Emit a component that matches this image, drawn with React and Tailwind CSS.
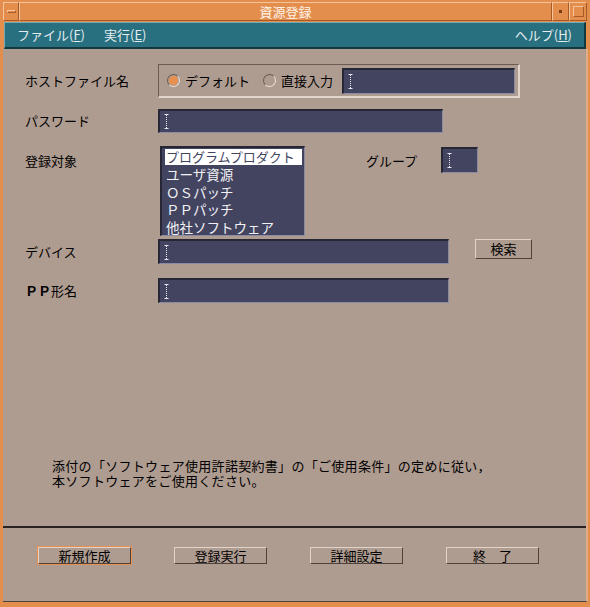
import React from 'react';

function IBeam() {
  return (
    <svg width="5" height="15" viewBox="0 0 5 15" className="shrink-0">
      <path d="M0.5 0.5H4.5M0.5 14.5H4.5" stroke="#e6e6f0" strokeWidth="1" />
      <path d="M2.5 1V14" stroke="#e6e6f0" strokeWidth="1" strokeDasharray="1 1" />
    </svg>
  );
}

function Field({ className }) {
  return (
    <div
      className={`flex items-center pl-[4px] bg-[#424460] border-t-2 border-l-2 border-t-[#262634] border-l-[#262634] border-b border-r border-b-[#8c8ba6] border-r-[#8c8ba6] ${className}`}
    >
      <IBeam />
    </div>
  );
}

function Radio({ on }) {
  return (
    <span className="w-[13px] h-[13px] shrink-0 rounded-full border border-t-[#6b5b53] border-l-[#6b5b53] border-b-[#efe1d8] border-r-[#efe1d8] flex items-center justify-center">
      {on && <span className="w-[9px] h-[9px] rounded-full bg-[#e8904f]" />}
    </span>
  );
}

function Button({ children, focus }) {
  return (
    <div className={`border ${focus ? 'border-[#e8904f]' : 'border-transparent'}`}>
      <div className="w-[93px] h-[17px] flex items-center justify-center text-[13px] text-black border-t border-l border-t-[#e2d3ca] border-l-[#e2d3ca] border-b border-r border-b-[#4f423c] border-r-[#4f423c]">
        {children}
      </div>
    </div>
  );
}

const LIST = ['ユーザ資源', 'ＯＳパッチ', 'ＰＰパッチ', '他社ソフトウェア'];

export default function App() {
  return (
    <div className="w-[590px] h-[607px] bg-[#e48e4e] pt-[2px] pl-[3px] pr-[3px] pb-[5px] flex flex-col font-['Noto_Sans_CJK_JP','Noto_Sans',sans-serif] overflow-hidden">
      {/* title bar */}
      <div className="h-[19px] flex shrink-0">
        <div className="w-[16px] flex items-center justify-center border-t border-l border-t-[#f6c39b] border-l-[#f6c39b] border-b border-r border-b-[#a85a26] border-r-[#a85a26]">
          <span className="w-[9px] h-[3px] border-t border-l border-t-[#f6c39b] border-l-[#f6c39b] border-b border-r border-b-[#a85a26] border-r-[#a85a26]" />
        </div>
        <div className="flex-1 flex items-center justify-center text-[13px] text-[#fff4ea] border-t border-l border-t-[#f6c39b] border-l-[#f6c39b] border-b border-r border-b-[#a85a26] border-r-[#a85a26]">
          資源登録
        </div>
        <div className="w-[17px] flex items-center justify-center border-t border-l border-t-[#f6c39b] border-l-[#f6c39b] border-b border-r border-b-[#a85a26] border-r-[#a85a26]">
          <span className="w-[3px] h-[3px] bg-[#7a3c14]" />
        </div>
        <div className="w-[18px] flex items-center justify-center border-t border-l border-t-[#f6c39b] border-l-[#f6c39b] border-b border-r border-b-[#a85a26] border-r-[#a85a26]">
          <span className="w-[11px] h-[11px] border-t border-l border-t-[#f6c39b] border-l-[#f6c39b] border-b border-r border-b-[#a85a26] border-r-[#a85a26]" />
        </div>
      </div>

      {/* menu bar */}
      <div className="mt-[1px] mr-[1px] ml-[1px] h-[27px] shrink-0 bg-[#28707f] border-t border-l border-t-[#72aab6] border-l-[#72aab6] border-b-2 border-r-2 border-b-[#123840] border-r-[#123840] flex items-center pl-[12px] pr-[12px] text-[13px] text-[#e4ecee]">
        <span>ファイル(<u>F</u>)</span>
        <span className="ml-[19px]">実行(<u>E</u>)</span>
        <span className="ml-auto">ヘルプ(<u>H</u>)</span>
      </div>

      {/* body */}
      <div className="flex-1 flex flex-col bg-[#af9c91] border-r-2 border-r-[#e0ad88] border-b border-b-[#4f423c] mr-[-1px] text-black">
        <div className="flex-1 pl-[22px] text-[13px]">
          {/* host file */}
          <div className="flex items-center mt-[15px] h-[34px]">
            <div className="w-[133px]">ホストファイル名</div>
            <div className="w-[362px] h-[34px] flex items-center pl-[8px] border-t border-l border-t-[#6b5b53] border-l-[#6b5b53] border-b-2 border-r-2 border-b-[#e3d4cb] border-r-[#e3d4cb]">
              <Radio on />
              <span className="ml-[5px] w-[78px]">デフォルト</span>
              <Radio />
              <span className="ml-[5px] w-[61px]">直接入力</span>
              <Field className="w-[173px] h-[26px]" />
            </div>
          </div>

          {/* password */}
          <div className="flex items-center mt-[11px] h-[24px]">
            <div className="w-[133px]">パスワード</div>
            <Field className="w-[285px] h-[24px]" />
          </div>

          {/* target */}
          <div className="flex items-start mt-[13px]">
            <div className="w-[135px] pt-[5px]">登録対象</div>
            <div className="w-[145px] h-[90px] bg-[#424460] border-t-2 border-l-2 border-t-[#262634] border-l-[#262634] border-b border-r border-b-[#8c8ba6] border-r-[#8c8ba6] pt-[1px] pl-[3px] pr-[2px] text-[13.5px] text-[#f2f2f6]">
              <div className="h-[16px] bg-white text-[#424460] text-[13px] leading-[16px] pl-[1px] mb-[1px] whitespace-nowrap">
                プログラムプロダクト
              </div>
              {LIST.map((t) => (
                <div key={t} className="h-[17.5px] leading-[17.5px] pl-[1px] whitespace-nowrap">
                  {t}
                </div>
              ))}
            </div>
            <div className="ml-[61px] w-[75px] pt-[5px]">グループ</div>
            <Field className="w-[37px] h-[26px] mt-[1px]" />
          </div>

          {/* device */}
          <div className="flex items-start mt-[3px]">
            <div className="w-[133px] h-[25px] flex items-center">デバイス</div>
            <Field className="w-[291px] h-[25px]" />
            <div className="ml-[26px] w-[57px] h-[20px] flex items-center justify-center border-t border-l border-t-[#e2d3ca] border-l-[#e2d3ca] border-b border-r border-b-[#4f423c] border-r-[#4f423c]">
              検索
            </div>
          </div>

          {/* pp name */}
          <div className="flex items-center mt-[14px] h-[25px]">
            <div className="w-[133px]">
              <span className="font-bold">ＰＰ</span>形名
            </div>
            <Field className="w-[291px] h-[25px]" />
          </div>

          {/* notice */}
          <div className="mt-[156px] ml-[27px] leading-[14px] tracking-[0.3px]">
            <div>添付の「ソフトウェア使用許諾契約書」の「ご使用条件」の定めに従い，</div>
            <div className="mt-[1px]">本ソフトウェアをご使用ください。</div>
          </div>
        </div>

        {/* action area */}
        <div className="h-[2px] bg-[#2a2220] shrink-0" />
        <div className="h-[73px] shrink-0 pt-[18px] pl-[34px] flex items-start gap-[41px]">
          <Button focus>新規作成</Button>
          <Button>登録実行</Button>
          <Button>詳細設定</Button>
          <Button>終　了</Button>
        </div>
      </div>
    </div>
  );
}
